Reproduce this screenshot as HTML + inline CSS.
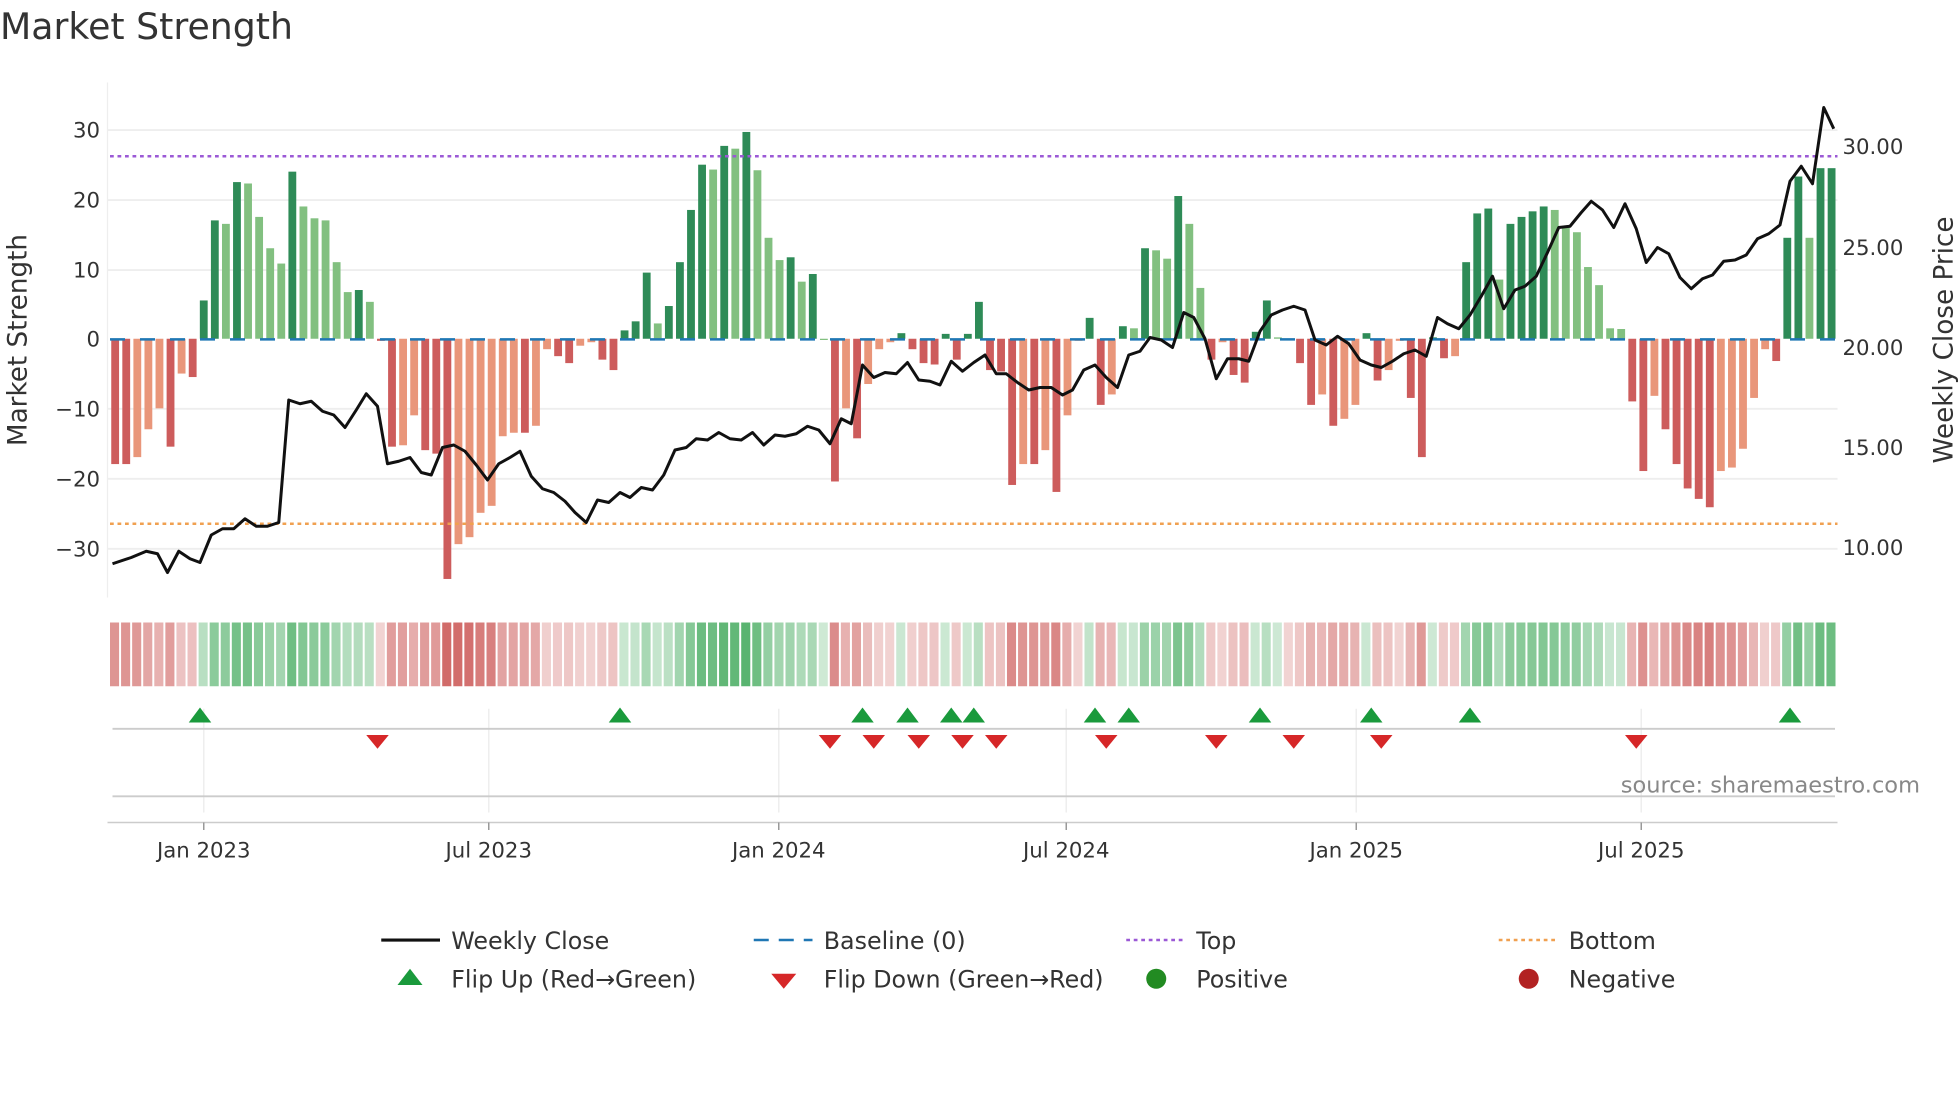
<!DOCTYPE html>
<html><head><meta charset="utf-8"><style>
html,body{margin:0;padding:0;background:#fff;}
svg{display:block;font-family:"DejaVu Sans","Liberation Sans",sans-serif;}
</style></head><body>
<svg id="s" width="1960" height="1102" viewBox="0 0 1568 881.6" xmlns="http://www.w3.org/2000/svg">
<rect width="1568" height="882" fill="#fff"/>
<text x="0" y="31" font-size="29" fill="#333">Market Strength</text>
<g stroke="#eeeeee" stroke-width="1.5">
<line x1="86" x2="1470" y1="104" y2="104"/><line x1="86" x2="1470" y1="160" y2="160"/><line x1="86" x2="1470" y1="216" y2="216"/><line x1="86" x2="1470" y1="327" y2="327"/><line x1="86" x2="1470" y1="383" y2="383"/><line x1="86" x2="1470" y1="439" y2="439"/>
</g>
<line x1="86" x2="86" y1="66" y2="478" stroke="#eee"/>
<g font-size="17" fill="#333" text-anchor="end">
<text x="80" y="110">30</text><text x="80" y="166">20</text><text x="80" y="222">10</text><text x="80" y="277">0</text><text x="80" y="333">−10</text><text x="80" y="389">−20</text><text x="80" y="445">−30</text>
</g>
<g font-size="17" fill="#333">
<text x="1474" y="123">30.00</text><text x="1474" y="204">25.00</text><text x="1474" y="284">20.00</text><text x="1474" y="364">15.00</text><text x="1474" y="444">10.00</text>
</g>
<text transform="translate(21,272) rotate(-90)" font-size="21" fill="#333" text-anchor="middle">Market Strength</text>
<text transform="translate(1562,272) rotate(-90)" font-size="21" fill="#333" text-anchor="middle">Weekly Close Price</text>
<g id="bars"></g>
<line x1="88" x2="1470" y1="271.5" y2="271.5" stroke="#1f77b4" stroke-width="2" stroke-dasharray="12,12"/>
<line x1="88" x2="1470" y1="125" y2="125" stroke="#9b59d6" stroke-width="2" stroke-dasharray="3,3"/>
<line x1="88" x2="1470" y1="419" y2="419" stroke="#f0a050" stroke-width="2" stroke-dasharray="3,3"/>
<polyline fill="none" stroke="#111" stroke-width="2.4" stroke-linejoin="round" points="90,451 105,446 117,441 126,443 134,458 143,441 152,447 160,450 169,428 178,423 187,423 196,415 205,421 214,421 223,418 231,320 240,323 249,321 258,329 267,332 276,342 285,328 293,315 302,325 310,371 319,369 328,366 337,378 345,380 354,358 363,356 372,361 381,372 390,384 399,371 408,366 416,361 425,381 434,391 443,394 452,401 460,410 469,418 478,400 487,402 496,394 504,398 513,390 522,392 531,380 540,360 549,358 557,351 566,352 575,346 584,351 593,352 602,346 611,356 620,348 628,349 637,347 646,341 655,344 664,355 673,335 681,339 690,292 699,302 708,298 717,299 726,290 735,304 744,305 752,308 761,289 770,297 779,290 788,284 797,299 805,299 814,306 823,312 832,310 841,310 850,316 858,312 867,296 876,292 885,302 894,310 903,284 912,281 920,270 929,272 938,278 947,250 955,254 964,271 973,303 982,287 991,287 999,289 1008,265 1017,252 1026,248 1035,245 1044,248 1052,272 1061,276 1070,269 1079,275 1088,288 1097,292 1105,294 1114,289 1123,283 1132,280 1141,285 1150,254 1158,259 1167,263 1176,252 1185,237 1194,221 1203,247 1212,232 1220,229 1229,221 1238,202 1247,182 1256,181 1265,170 1273,161 1282,168 1291,182 1300,163 1309,183 1317,210 1326,198 1335,203 1344,222 1353,231 1362,223 1370,220 1379,209 1388,208 1397,204 1406,191 1415,187 1424,180 1432,145 1441,133 1450,147 1459,86 1467,103"/>
<g id="heat"></g>
<g stroke="#eeeeee" stroke-width="1.2">
<line x1="163" x2="163" y1="567" y2="650"/><line x1="391" x2="391" y1="567" y2="650"/><line x1="623" x2="623" y1="567" y2="650"/><line x1="853" x2="853" y1="567" y2="650"/><line x1="1085" x2="1085" y1="567" y2="650"/><line x1="1313" x2="1313" y1="567" y2="650"/>
</g>
<line x1="90" x2="1468" y1="583" y2="583" stroke="#ccc" stroke-width="1.5"/>
<line x1="90" x2="1468" y1="637" y2="637" stroke="#ccc" stroke-width="1.5"/>
<g id="flips"></g>
<text x="1536" y="634" font-size="18" fill="#888" text-anchor="end">source: sharemaestro.com</text>
<line x1="86" x2="1470" y1="658" y2="658" stroke="#ccc" stroke-width="1.2"/>
<g stroke="#999" stroke-width="1.2">
<line x1="163" x2="163" y1="658" y2="664"/><line x1="391" x2="391" y1="658" y2="664"/><line x1="623" x2="623" y1="658" y2="664"/><line x1="853" x2="853" y1="658" y2="664"/><line x1="1085" x2="1085" y1="658" y2="664"/><line x1="1313" x2="1313" y1="658" y2="664"/>
</g>
<g font-size="17" fill="#333" text-anchor="middle">
<text x="163" y="686">Jan 2023</text><text x="391" y="686">Jul 2023</text><text x="623" y="686">Jan 2024</text><text x="853" y="686">Jul 2024</text><text x="1085" y="686">Jan 2025</text><text x="1313" y="686">Jul 2025</text>
</g>
<g font-size="19" fill="#333">
<line x1="305" x2="352" y1="752" y2="752" stroke="#111" stroke-width="2.5"/><text x="361" y="759">Weekly Close</text>
<line x1="603" x2="650" y1="752" y2="752" stroke="#1f77b4" stroke-width="2" stroke-dasharray="12,8"/><text x="659" y="759">Baseline (0)</text>
<line x1="901" x2="948" y1="752" y2="752" stroke="#9b59d6" stroke-width="2" stroke-dasharray="3,3"/><text x="957" y="759">Top</text>
<line x1="1199" x2="1246" y1="752" y2="752" stroke="#f0a050" stroke-width="2" stroke-dasharray="3,3"/><text x="1255" y="759">Bottom</text>
<polygon points="328,775 338,788 318,788" fill="#1a9a3c"/><text x="361" y="790">Flip Up (Red→Green)</text>
<polygon points="617,779 637,779 627,791" fill="#d62728"/><text x="659" y="790">Flip Down (Green→Red)</text>
<circle cx="925" cy="783" r="8" fill="#228b22"/><text x="957" y="790">Positive</text>
<circle cx="1223" cy="783" r="8" fill="#b22222"/><text x="1255" y="790">Negative</text>
</g>
</svg>
<script>
var v=[-18,-18,-17,-13,-10,-15.5,-5,-5.5,5.5,17,16.5,22.5,22.3,17.5,13,10.8,24,19,17.3,17,11,6.7,7,5.3,-0.3,-15.5,-15.3,-11,-16,-16.5,-34.5,-29.5,-28.5,-25,-24,-14,-13.5,-13.5,-12.5,-1.5,-2.5,-3.5,-1,-0.5,-3,-4.5,1.2,2.5,9.5,2.2,4.7,11,18.5,25,24.3,27.7,27.3,29.7,24.2,14.5,11.3,11.7,8.2,9.3,0,-20.5,-10,-14.3,-6.5,-1.5,-0.5,0.8,-1.5,-3.5,-3.7,0.7,-3,0.7,5.3,-4.5,-4.7,-21,-18,-18,-16,-22,-11,-0.3,3,-9.5,-8,1.8,1.5,13,12.7,11.5,20.5,16.5,7.3,-3,-0.5,-5.2,-6.3,1,5.5,0.2,-0.2,-3.5,-9.5,-8,-12.5,-11.5,-9.5,0.8,-6,-4.5,-0.3,-8.5,-17,0.2,-2.8,-2.5,11,18,18.7,8.5,16.5,17.5,18.3,19,18.5,16,15.3,10.3,7.7,1.5,1.4,-9,-19,-8.2,-13,-18,-21.5,-23,-24.2,-19,-18.5,-15.8,-8.5,-1.5,-3.2,14.5,23.3,14.5,24.5,24.5];
var n=v.length,x0=88,step=(1470-88)/n,ns="http://www.w3.org/2000/svg";
var bars=document.getElementById('bars'),heat=document.getElementById('heat');
function r(g,x,y,w,h,c,o){var e=document.createElementNS(ns,'rect');e.setAttribute('x',x);e.setAttribute('y',y);e.setAttribute('width',w);e.setAttribute('height',h);e.setAttribute('fill',c);if(o!=null)e.setAttribute('fill-opacity',o);g.appendChild(e);}
for(var i=0;i<n;i++){var a=v[i],p=i?v[i-1]:0,x=x0+i*step,c;
 if(a>=0)c=(a>=p)?'#2e8b57':'#82c080';else c=(a<=p)?'#cd5c5c':'#e9967a';
 var h=Math.abs(a)*5.57;r(bars,x+1,a>=0?271-h:271,step-2.6,Math.max(h,1),c);
 var hc=a>=0?'#3aa655':'#c9514f';var o=0.25+Math.min(Math.abs(a)/30,1)*0.6;
 r(heat,x,498,step-1.6,51,hc,o);}
var up=[160,496,690,726,761,779,876,903,1008,1097,1176,1432],dn=[302,664,699,735,770,797,885,973,1035,1105,1309];
var f=document.getElementById('flips');
up.forEach(function(x){var e=document.createElementNS(ns,'polygon');e.setAttribute('points',(x)+',566 '+(x+9)+',578 '+(x-9)+',578');e.setAttribute('fill','#1a9a3c');f.appendChild(e);});
dn.forEach(function(x){var e=document.createElementNS(ns,'polygon');e.setAttribute('points',(x-9)+',588 '+(x+9)+',588 '+x+',599');e.setAttribute('fill','#d62728');f.appendChild(e);});
</script>
</body></html>
